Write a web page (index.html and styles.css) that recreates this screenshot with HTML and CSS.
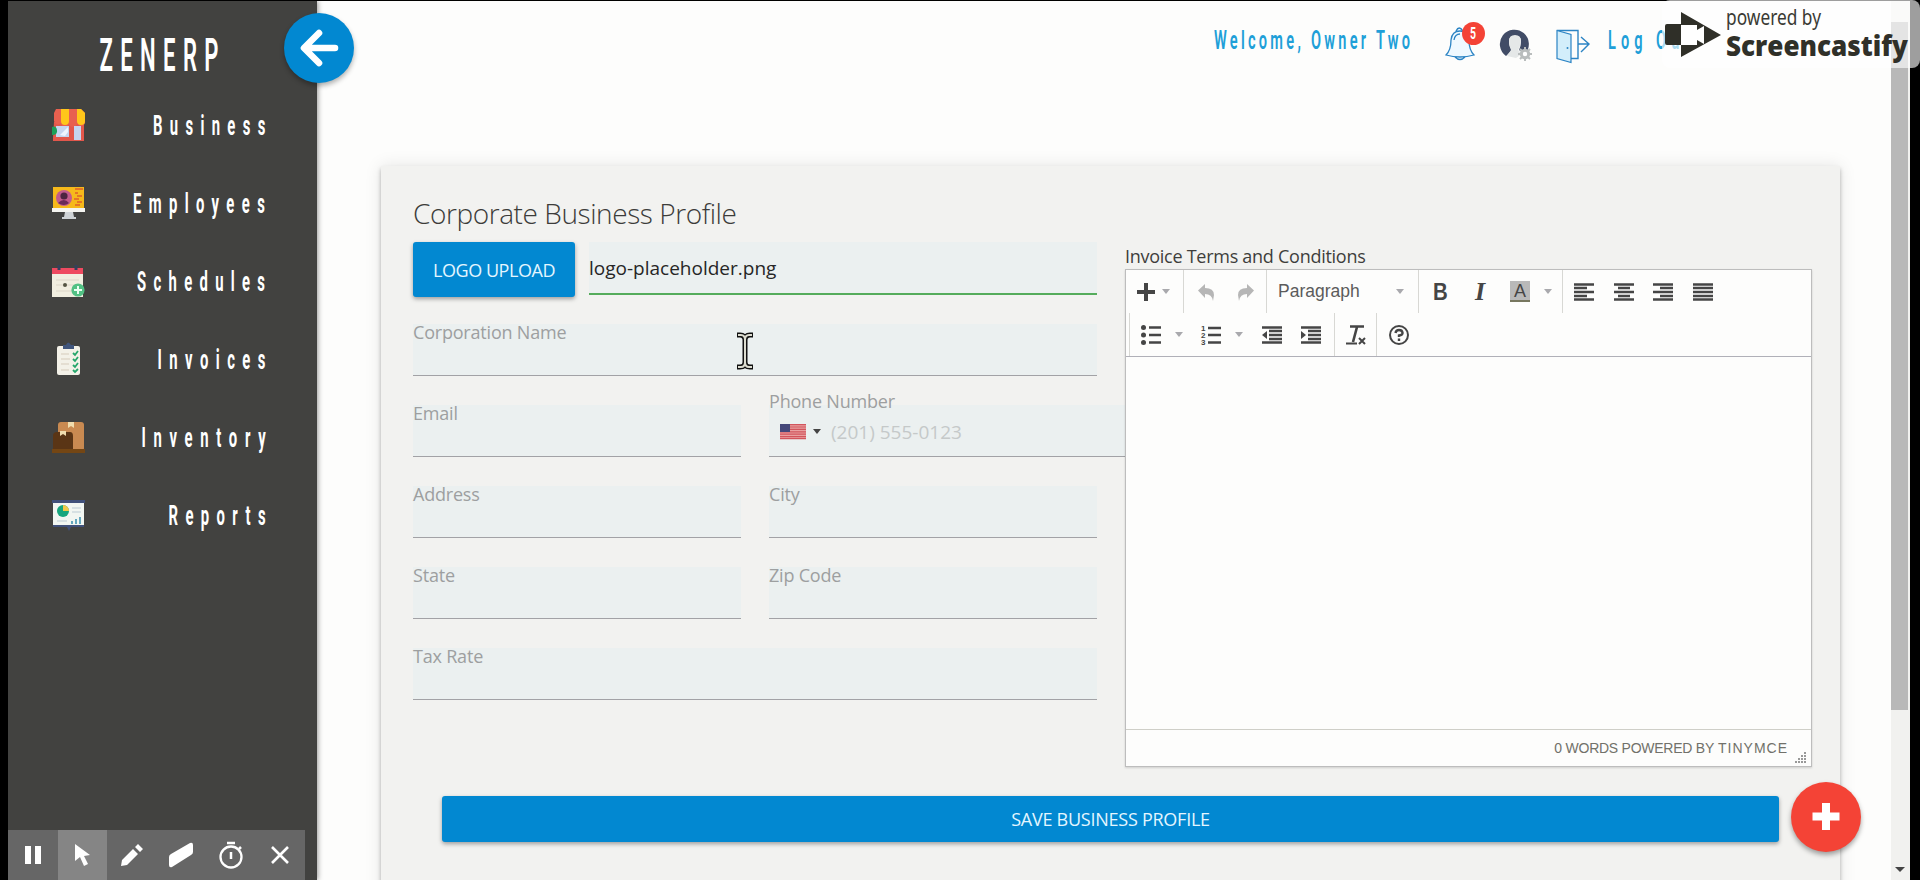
FILE: index.html
```html
<!DOCTYPE html>
<html lang="en">
<head>
<meta charset="utf-8">
<title>ZENERP</title>
<link rel="stylesheet" href="styles.css">
</head>
<body>
<aside class="sidebar">
  <div class="brand"><svg width="124" height="50"><text class="cond brand-text" transform="scale(.48 1)" x="1" y="43" textLength="248">ZENERP</text></svg></div>
  <nav class="nav">
    <a class="nav-item">
      <svg width="33" height="34" viewBox="0 0 33 34"><path fill="#e2574c" d="M2 14h30v19H1v-3z"/><path fill="#e8604f" d="M4 1h25l4 4v8a4 4 0 0 1-8 2 4 4 0 0 1-8 0 4 4 0 0 1-8 0 4 4 0 0 1-7-2V5z"/><path fill="#ffc61a" d="M9 1h8v12a4 4 0 0 1-8 0zM25 1h4l4 4v8a4 4 0 0 1-8 0z"/><path fill="#c5d5f0" d="M4 18h13v11H4zM22 18h7v14h-7z"/><path fill="#eef4ff" d="m8 27 8-8v5l-3 4z"/><path fill="#1ba05a" d="M0 19q4-2 5 3t-5 5z"/></svg>
      <svg width="114" height="40"><text class="cond" transform="scale(.54 1)" x="0" y="30" textLength="208">Business</text></svg>
    </a>
    <a class="nav-item">
      <svg width="33" height="34" viewBox="0 0 33 34"><path fill="#f6b91b" d="M1 1h31v22H1z"/><circle cx="12" cy="12" r="8" fill="#c25b8c"/><circle cx="12" cy="10" r="3.6" fill="#4c2440"/><path fill="#6a2a58" d="M6 17q6-6 11 0-5 4-11 0z"/><path stroke="#e0602a" stroke-width="1.3" d="M23 3h8M23 7h3M25 10h5M22 13h5M25 16h5M23 19h5"/><path fill="#f4f4f0" d="M0 22h33v4H0z"/><path fill="#cfd3d6" d="M13 26h8l1 5h2v2H10v-2h2z"/></svg>
      <svg width="134" height="40"><text class="cond" transform="scale(.54 1)" x="0" y="30" textLength="244">Employees</text></svg>
    </a>
    <a class="nav-item">
      <svg width="33" height="34" viewBox="0 0 33 34"><path fill="#f1eee0" d="M0 8h31v25H0z"/><path fill="#ee4a60" d="M0 4h31v6H0z"/><path stroke="#34405c" stroke-width="3" d="M7 1v5M24 1v5"/><path stroke="#ddd6c8" d="M4 16h23M4 21h23M4 27h18"/><circle cx="13" cy="21" r="2" fill="#555544"/><circle cx="26" cy="26" r="6.6" fill="#52c184"/><path stroke="#e9fff1" stroke-width="2" d="M22 26h8M26 22v8"/></svg>
      <svg width="130" height="40"><text class="cond" transform="scale(.54 1)" x="0" y="30" textLength="237">Schedules</text></svg>
    </a>
    <a class="nav-item">
      <svg width="33" height="34" viewBox="0 0 33 34"><rect x="5" y="4" width="23" height="29" rx="2" fill="#f3f1e8"/><path fill="#40557c" d="M11 3h3q2-5 5 0h3v4H11z"/><path stroke="#d5cbbb" d="M9 12h8M9 17h9M9 22h8M9 28h8"/><path fill="none" stroke="#25a66b" stroke-width="1.8" d="m21 11 2 2 3-4M21 17l2 2 3-4M21 23l2 2 3-4M21 28l2 2 3-3"/></svg>
      <svg width="109" height="40"><text class="cond" transform="scale(.54 1)" x="-1" y="30" textLength="200">Invoices</text></svg>
    </a>
    <a class="nav-item">
      <svg width="33" height="34" viewBox="0 0 33 34"><rect x="6" y="2" width="26" height="29" rx="3" fill="#c98a51"/><path fill="#5a3515" d="M1 16q0-4 4-4h13q3 0 3 4v14H1z"/><path fill="#f1ddae" d="M16 2h6v6l-3-2-3 2zM8 11h6v5l-3-2-3 2z"/><path fill="#744614" d="M0 29h33v4H0z"/></svg>
      <svg width="125" height="40"><text class="cond" transform="scale(.54 1)" x="-1" y="30" textLength="230">Inventory</text></svg>
    </a>
    <a class="nav-item">
      <svg width="33" height="34" viewBox="0 0 33 34"><path fill="#40507a" d="M0 2h33v3H0zM1 26h31v3H1zM15 29h4l-2 4z"/><path fill="#f2f6f2" d="M1 5h31v22H1z"/><circle cx="11" cy="13" r="6" fill="#17a67d"/><path fill="#f2c94a" d="M11 13V7a6 6 0 0 1 6 6z"/><path stroke="#bccbd4" d="M20 10h9M20 14h9M5 23h10"/><path stroke="#65a8c0" stroke-width="2" d="M20 26v-3M24 26v-5M28 26v-7"/></svg>
      <svg width="98" height="40"><text class="cond" transform="scale(.54 1)" x="-1" y="30" textLength="180">Reports</text></svg>
    </a>
  </nav>
  <div class="back"><svg width="70" height="70"><path fill="none" stroke="#fff" stroke-width="6.6" stroke-linecap="round" stroke-linejoin="round" d="M35 20 20 35l15 15M21 35h30"/></svg></div>
</aside>

<main class="main">
  <header class="top">
    <svg class="welcome" width="200" height="50"><text class="cond head-text" transform="scale(.56 1)" x="0" y="36" textLength="350">Welcome, Owner Two</text></svg>
    <div class="bell">
      <svg width="30" height="36" viewBox="0 0 30 36"><path fill="#eff9ff" stroke="#2c84c4" stroke-width="1.3" d="M1 30q5-5 5-15 1-9 9-9t9 9q0 10 5 15Q15 34 1 30zM11 6q3-6 7 0M10 32q5 5 10 0M9 15q1-6 6-6"/></svg>
      <span class="badge"><svg width="23" height="23"><text x="8" y="17" textLength="6" lengthAdjust="spacingAndGlyphs" class="badge-text">5</text></svg></span>
    </div>
    <svg class="user" width="34" height="36" viewBox="0 0 34 36"><path fill="#414c66" d="M7 28A14.500 14.500 0 1 1 26 26l-6-4q2-4 2-9 0-5-6-5t-6 5q0 6 3 9z"/><path fill="#e5e8e8" d="M10 13q0-6 6-6t6 6q-1 7-3 9l4 4-6 4-9-2 4-6q-2-4-2-9z"/><circle cx="26" cy="26" r="3.700" fill="#fff" stroke="#b9bdbd" stroke-width="3"/><path stroke="#b9bdbd" stroke-width="2" d="M26 19v3M26 30v3M19 26h3M30 26h3M21 21l2 2M29 29l2 2M31 21l-2 2M23 29l-2 2"/></svg>
    <svg class="door" width="34" height="35" viewBox="0 0 34 35"><path fill="none" stroke="#2c84c4" stroke-width="1.400" d="M1 1.500h21v28h-7M22 15h10M25 8l8 7-8 8"/><path fill="#d3eefb" stroke="#2c84c4" stroke-width="1.200" d="m1 1.500 14 4v28l-14-4z"/><circle cx="11.500" cy="19" r="1" fill="#2c84c4"/></svg>
    <svg class="logout" width="84" height="50"><text class="cond head-text" transform="scale(.56 1)" x="0" y="36" textLength="145">Log Out</text></svg>
  </header>

  <section class="card">
    <form class="form">
      <h1 class="title">Corporate Business Profile</h1>
      <div class="upload">
        <span class="btn upload-btn">LOGO UPLOAD</span>
        <div class="file">logo-placeholder.png</div>
      </div>
      <div class="grid">
        <div class="field wide"><label>Corporation Name</label></div>
        <div class="field"><label>Email</label></div>
        <div class="field phone"><label>Phone Number</label>
          <div class="dial">
            <svg width="26" height="15"><path fill="#e9a1a1" d="M0 0h26v15H0z"/><path stroke="#d2555d" stroke-width="1.200" d="M0 .6h26M0 3h26M0 5.400h26M0 7.800h26M0 10.200h26M0 12.600h26M0 14.600h26"/><path fill="#45487a" d="M0 0h10v8H0z"/></svg>
            <i class="caret dark"></i><span>(201) 555-0123</span>
          </div>
        </div>
        <div class="field"><label>Address</label></div>
        <div class="field"><label>City</label></div>
        <div class="field"><label>State</label></div>
        <div class="field"><label>Zip Code</label></div>
        <div class="field wide"><label>Tax Rate</label></div>
      </div>
    </form>
    <div class="terms">
      <div class="terms-label">Invoice Terms and Conditions</div>
      <div class="editor">
        <div class="tools">
          <div class="row">
            <div class="group g1"><svg width="18" height="18"><path stroke="#454545" stroke-width="4" d="M9 0v18M0 9h18"/></svg><i class="caret"></i></div>
            <div class="group g2"><svg width="16" height="18" viewBox="0 0 16 18"><path fill="#b6b6b6" d="M0 7.500 7 1v4q9 0 9 7l-1 6q-1-7-8-7v4z"/></svg><svg width="16" height="18" viewBox="0 0 16 18"><path fill="#b6b6b6" d="M16 7.500 9 1v4q-9 0-9 7l1 6q1-7 8-7v4z"/></svg></div>
            <div class="group g3"><span class="para">Paragraph</span><i class="caret"></i></div>
            <div class="group g4"><b class="bold">B</b><i class="ital">I</i><span class="color">A</span><i class="caret"></i></div>
            <div class="group g5">
              <svg width="20" height="18"><path class="bars" d="M0 1.500h20M0 5h13M0 9h20M0 13h13M0 16.500h20"/></svg>
              <svg width="20" height="18"><path class="bars" d="M0 1.500h20M4 5h12M0 9h20M4 13h12M0 16.500h20"/></svg>
              <svg width="20" height="18"><path class="bars" d="M0 1.500h20M7 5h13M0 9h20M7 13h13M0 16.500h20"/></svg>
              <svg width="20" height="18"><path class="bars" d="M0 1.500h20M0 5h20M0 9h20M0 13h20M0 16.500h20"/></svg>
            </div>
          </div>
          <div class="row second">
            <div class="group h1">
              <svg width="20" height="20"><path class="bars" d="M8 2.500h12M8 10h12M8 17.500h12"/><g fill="#454545"><circle cx="2.500" cy="2.500" r="2.500"/><circle cx="2.500" cy="10" r="2.500"/><circle cx="2.500" cy="17.500" r="2.500"/></g></svg><i class="caret"></i>
              <svg class="num" width="20" height="20"><path class="bars" d="M7 3h13M7 10h13M7 17.500h13"/><text x="0" y="6">1</text><text x="0" y="13">2</text><text x="0" y="20">3</text></svg><i class="caret"></i>
              <svg class="out" width="20" height="18"><path class="bars" d="M0 1.500h20M7 5h13M7 9h13M7 13h13M0 16.500h20"/><path fill="#454545" d="M5 5v8L0 9z"/></svg>
              <svg class="in" width="20" height="18"><path class="bars" d="M0 1.500h20M7 5h13M7 9h13M7 13h13M0 16.500h20"/><path fill="#454545" d="M0 5v8l5-4z"/></svg>
            </div>
            <div class="group h2"><svg width="20" height="20"><path fill="none" stroke="#454545" stroke-width="2.600" d="M4 1.500h14M11 2 7 17"/><path stroke="#454545" stroke-width="2" d="M0 18.500h11M13 13l6 6M19 13l-6 6"/></svg></div>
            <div class="group h3"><svg width="20" height="20"><circle cx="10" cy="10" r="9" fill="none" stroke="#454545" stroke-width="2"/><path fill="none" stroke="#454545" stroke-width="2.400" d="M6.500 8q.5-3 3.500-3t3.500 2.500-3.500 3V12M10 13.500V16"/></svg></div>
          </div>
        </div>
        <div class="content"></div>
        <div class="status"><span class="words">0 WORDS POWERED BY</span><span class="mce">TINYMCE</span>
          <svg width="12" height="12"><path fill="none" stroke="#999" stroke-width="2" stroke-dasharray="2 1" d="M0 11h12M3 8h9M6 5h6M9 2h3"/></svg></div>
      </div>
    </div>
    <span class="btn save">SAVE BUSINESS PROFILE</span>
  </section>
</main>
<div class="scroll"><div class="up"></div><div class="thumb"></div><div class="down"><i class="caret dark"></i></div></div>

<div class="fab"><svg width="70" height="70"><path stroke="#fff" stroke-width="8" d="M35 21v27M21.500 34.500h27"/></svg></div>

<svg class="ibeam" width="18" height="38" viewBox="0 0 18 38"><path fill="none" stroke="#111" stroke-width="5" d="M1 3h3q5 0 5 5v22q0 5-5 5H1M17 3h-3q-5 0-5 5v22q0 5 5 5h3"/><path fill="none" stroke="#dcdcd0" stroke-width="2" d="M2 3h3q4 0 4 5v22q0 5-4 5H2M16 3h-3q-4 0-4 5v22q0 5 4 5h3"/></svg>

<div class="recorder">
  <div class="rec"><svg width="24" height="24"><path fill="#fff" d="M4 3h6v18H4zM14 3h6v18h-6z"/></svg></div>
  <div class="rec active"><svg width="24" height="24"><path fill="#fff" d="m5 1 15 11-6 1 4 8-4 2-4-9-5 4z"/></svg></div>
  <div class="rec"><svg width="24" height="24"><path fill="#fff" d="M1 23 2 17 13 6l5 5L7 22zM15 4l3-3 5 5-3 3z"/></svg></div>
  <div class="rec"><svg width="26" height="26"><path fill="#fff" d="M1 15q0-2 2-3L22 1q3-1 3 2v7q0 2-2 3L4 25q-3 1-3-2z"/></svg></div>
  <div class="rec"><svg width="26" height="28"><circle cx="13" cy="16" r="10.500" fill="none" stroke="#fff" stroke-width="2.300"/><path stroke="#fff" stroke-width="2.500" d="M9 2h8M13 11v7M21 8l2-2"/></svg></div>
  <div class="rec"><svg width="18" height="18"><path stroke="#fff" stroke-width="2.600" d="m1 1 16 16M17 1 1 17"/></svg></div>
</div>

<div class="watermark">
  <svg width="258" height="68"><path fill="#2f2f28" d="M5 24h14v21H5q-2 0-2-2V26q0-2 2-2zM19 12l40 23-40 22z"/><path fill="#fff" d="M19 25h16v5l7-4v18l-7-4v5H19z"/>
  <text class="pow" x="64" y="25" textLength="95" lengthAdjust="spacingAndGlyphs">powered by</text><text class="cast" x="64" y="56" textLength="182" lengthAdjust="spacingAndGlyphs">Screencastify</text></svg>
</div>
</body>
</html>
```
FILE: styles.css
```css
* { box-sizing: border-box; }
html, body { height: 100%; }
body {
  margin: 0;
  padding: 1px 10px 0 8px;
  display: flex;
  background: #000;
  overflow: hidden;
  font-family: "Open Sans", "Noto Sans", sans-serif;
  font-size: 18px;
}
svg { display: block; flex: none; overflow: visible; }

.sidebar {
  position: relative;
  z-index: 2;
  width: 309px;
  flex: none;
  background: #424240;
  box-shadow: 1px 0 5px rgba(0, 0, 0, .4);
}
.cond { font: 700 27.500px Roboto, sans-serif; fill: #fff; }
.brand { height: 85px; padding: 27px 0 0 91px; }
.cond.brand-text { font-size: 46px; font-weight: 600; }
.nav { display: flex; flex-direction: column; }
.nav-item { display: flex; height: 78px; align-items: center; justify-content: space-between; padding: 0 50px 0 44px; }
.back {
  position: absolute;
  top: 12px;
  left: 276px;
  width: 70px;
  height: 70px;
  border-radius: 50%;
  background: #0288d1;
  box-shadow: 0 3px 5px rgba(0, 0, 0, .3);
}

.main { flex: 1; background: #fdfdfc; display: flex; flex-direction: column; overflow: hidden; }
.top { flex: none; display: flex; height: 165px; padding: 12px 0 0 897px; align-items: flex-start; }
.cond.head-text { font-size: 26px; font-weight: 600; fill: #209fd8; }
.bell { position: relative; margin: 12px 0 0 31px; }
.badge { position: absolute; left: 17px; top: -3px; width: 23px; height: 23px; border-radius: 50%; background: #f44336; }
.badge-text { font: 700 16px Roboto, sans-serif; fill: #fff; }
.user { margin: 15px 0 0 24px; }
.door { margin: 16px 0 0 23px; }
.logout { margin-left: 18px; }

.card {
  flex: none;
  width: 1459px;
  height: 760px;
  margin-left: 64px;
  background: #f2f2f0;
  box-shadow: 0 3px 4px rgba(0, 0, 0, .28), 0 0 16px rgba(0, 0, 0, .1);
  padding: 28px 28px 0 32px;
  display: grid;
  grid-template-columns: 684px 687px;
  grid-template-rows: 573px 46px;
  column-gap: 28px;
  row-gap: 29px;
}
.title { margin: 0; height: 48px; font-size: 28px; line-height: 38px; font-weight: 300; color: #3c3c3a; letter-spacing: -.42px; white-space: nowrap; }
.upload { display: flex; gap: 14px; height: 55px; }
.btn { display: flex; align-items: center; justify-content: center; border-radius: 3px; background: #0288d1; color: #e4f6ff; box-shadow: 0 2px 4px rgba(0, 0, 0, .35); white-space: nowrap; }
.upload-btn { width: 162px; font-size: 18px; letter-spacing: -.45px; }
.file { flex: 1; height: 53px; line-height: 53px; font-size: 19px; color: #262626; background: #ebf0f0; border-bottom: 2px solid #55ac5c; }
.grid { display: grid; grid-template-columns: 328px 328px; column-gap: 28px; row-gap: 29px; padding-top: 27px; }
.field { height: 52px; background: #ebf0f0; border-bottom: 1.500px solid #a2a2a6; color: #9d9fa0; font-size: 18px; }
.field label { display: block; height: 24px; line-height: 24px; margin-top: -4px; white-space: nowrap; letter-spacing: -.2px; }
.wide { grid-column: span 2; }
.phone { width: 362px; }
.field.phone label { margin-top: -16px; }
.dial { display: flex; align-items: center; padding: 6px 0 0 11px; height: 31px; color: #c5c9c9; font-size: 19px; }
.dial .caret { margin: 0 10px 0 7px; }
.caret { width: 0; height: 0; border: 4px solid transparent; border-top: 5px solid #a9a9ad; border-bottom: 0; flex: none; }
.caret.dark { border-top-color: #444; }

.terms { padding-top: 50px; position: relative; }
.terms-label { height: 25px; line-height: 25px; color: #3e3e3c; font-size: 18px; letter-spacing: -.27px; white-space: nowrap; }
.editor { height: 498px; border: 1.500px solid #bdbdbd; background: #fdfdfc; display: flex; flex-direction: column; box-shadow: 0 1px 2px rgba(0, 0, 0, .15); font-family: "Liberation Sans", Arial, sans-serif; }
.tools { height: 87px; border-bottom: 1px solid #b0b0b8; }
.row { display: flex; height: 43px; }
.group { display: flex; align-items: center; border-right: 1px solid #d8d8d4; height: 43px; }
.g1 { width: 58px; padding-left: 11px; gap: 7px; }
.g2 { width: 83px; padding-left: 14px; gap: 24px; }
.g3 { width: 152px; padding: 0 14px 0 11px; justify-content: space-between; }
.g4 { width: 144px; padding-left: 14px; }
.g5 { border: 0; padding-left: 11px; gap: 19.500px; }
.para { font-size: 17.500px; color: #5b5b5b; }
.bold { font-size: 24px; color: #454545; width: 38px; transform: scaleX(.85); transform-origin: left; }
.ital { font: italic 700 26px "Liberation Serif", serif; color: #454545; width: 39px; padding-left: 4px; }
.color { width: 20px; height: 21px; margin-right: 14px; background: #b9b9b9; border-bottom: 2px solid #77775f; color: #454545; font-size: 18px; line-height: 20px; text-align: center; }
.bars { stroke: #454545; stroke-width: 2.500; fill: none; }
.second { margin-left: 3px; }
.h1 { width: 206px; padding-left: 11px; border-left: 1px solid #d8d8d4; }
.h1 .caret { margin-left: 14px; }
.h1 .num { margin-left: 18px; font: 700 8px "Liberation Sans", sans-serif; fill: #454545; }
.h1 .out { margin-left: 19px; }
.h1 .in { margin-left: 19px; }
.h2 { width: 42px; padding-left: 11px; }
.h3 { border: 0; padding-left: 12px; }
.content { flex: 1; }
.status { height: 37px; border-top: 1px solid #cfcfc8; display: flex; justify-content: flex-end; align-items: center; font-size: 14px; color: #71716a; padding-right: 4px; white-space: nowrap; }
.words { margin-right: 4px; letter-spacing: -.25px; }
.mce { letter-spacing: 1px; margin-right: 7px; }
.status svg { align-self: flex-end; margin-bottom: 3px; }
.save { grid-column: span 2; margin-left: 29px; font-size: 18px; letter-spacing: -.25px; width: 1337px; }

.scroll { width: 19px; background: #f1f1ef; display: flex; flex-direction: column; padding: 0 2px 0 0; }
.up { height: 21px; }
.thumb { height: 688px; background: #b8b8b8; }
.down { flex: 1; display: flex; align-items: flex-end; justify-content: center; padding-bottom: 8px; }
.down .caret { border-width: 5px 5px 0; }

.fab { position: absolute; left: 1791px; top: 782px; width: 70px; height: 70px; border-radius: 50%; background: #f44336; box-shadow: 0 3px 5px rgba(0, 0, 0, .35); }
.ibeam { position: absolute; left: 736px; top: 332px; }
.recorder { position: absolute; z-index: 3; left: 8px; top: 830px; width: 297px; height: 50px; display: flex; background: #666; }
.rec { flex: 1; display: flex; align-items: center; justify-content: center; }
.active { background: #858585; }
.watermark { position: absolute; z-index: 4; left: 1662px; top: 0; width: 258px; height: 68px; border-radius: 8px; background: rgba(255, 255, 255, .62); }
.pow { font: 400 21px "Noto Sans", sans-serif; fill: #3a3a34; }
.cast { font: 800 29px "Open Sans", sans-serif; fill: #303029; }
```
